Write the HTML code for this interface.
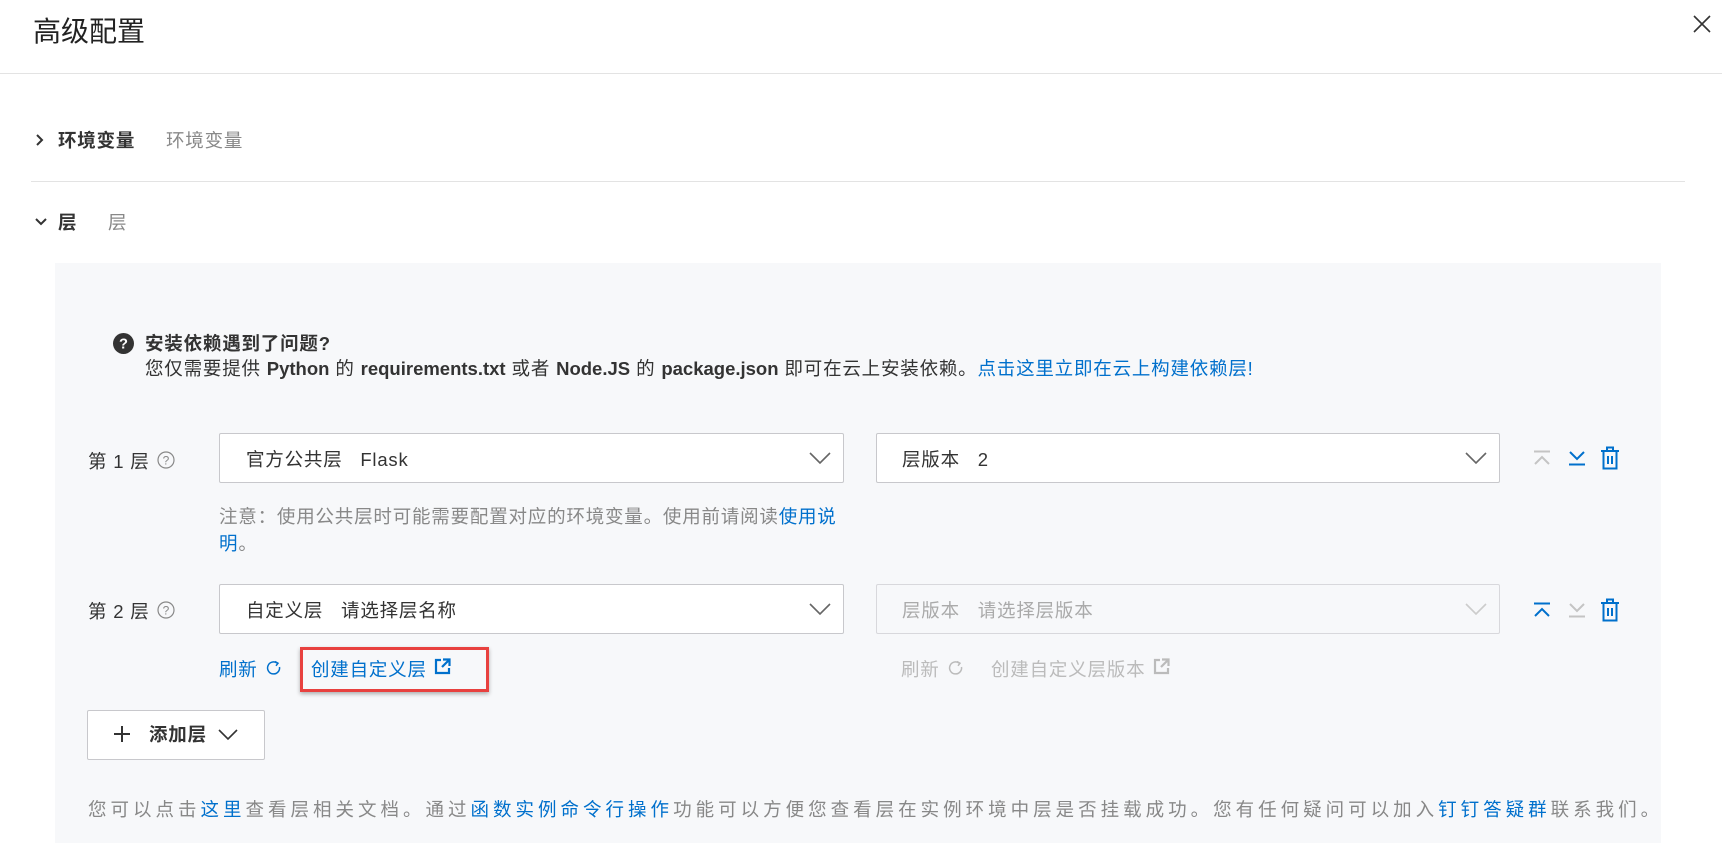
<!DOCTYPE html>
<html><head><meta charset="utf-8"><style>
*{box-sizing:border-box;margin:0;padding:0}
body{width:1722px;height:830px;overflow:hidden;background:#fff;font-family:"Liberation Sans","Noto Sans CJK SC",sans-serif;color:#333;position:relative}
.a{position:absolute;white-space:nowrap}
.t{font-size:18.5px;letter-spacing:0.8px}
.t b{letter-spacing:0}
.blue{color:#0070cc}
.gray{color:#888}
.lg{color:#bbb}
.sel{position:absolute;background:#fff;border:1px solid #c8c8cc;border-radius:2px;height:50px}
.sel span{position:absolute;top:12px;font-size:18.5px;letter-spacing:0.8px}
.sel svg{position:absolute;right:12px;top:17px}
</style></head><body>
<div class="a" style="left:33px;top:10px;font-size:28px;color:#222">高级配置</div>
<svg class="a" style="left:1693px;top:15px" width="18" height="18" viewBox="0 0 18 18"><path d="M1 1L17 17M17 1L1 17" stroke="#333" stroke-width="1.6"/></svg>
<div class="a" style="left:0;top:73px;width:1722px;height:1px;background:#e3e3e3"></div>

<svg class="a" style="left:35px;top:133px" width="10" height="14" viewBox="0 0 10 14"><path d="M2 2L7 7L2 12" stroke="#333" stroke-width="2" fill="none"/></svg>
<div class="a t" style="left:58px;top:127px;font-weight:bold;color:#333">环境变量</div>
<div class="a t gray" style="left:166px;top:127px">环境变量</div>
<div class="a" style="left:31px;top:181px;width:1654px;height:1px;background:#e3e3e3"></div>

<svg class="a" style="left:34px;top:217px" width="14" height="10" viewBox="0 0 14 10"><path d="M2 2L7 7L12 2" stroke="#333" stroke-width="2" fill="none"/></svg>
<div class="a t" style="left:58px;top:209px;font-weight:bold">层</div>
<div class="a t gray" style="left:108px;top:209px">层</div>

<div class="a" style="left:55px;top:263px;width:1606px;height:580px;background:#f7f8fa"></div>

<svg class="a" style="left:113px;top:333px" width="21" height="21" viewBox="0 0 20 20"><circle cx="10" cy="10" r="10" fill="#333"/><text x="10" y="15" text-anchor="middle" font-size="14" font-weight="bold" fill="#fff" font-family="Liberation Sans">?</text></svg>
<div class="a t" style="left:145px;top:330px;font-weight:bold">安装依赖遇到了问题?</div>
<div class="a t" style="left:145px;top:355px">您仅需要提供 <b>Python</b> 的 <b>requirements.txt</b> 或者 <b>Node.JS</b> 的 <b>package.json</b> 即可在云上安装依赖。<span class="blue">点击这里立即在云上构建依赖层!</span></div>

<div class="a t" style="left:88px;top:448px">第 1 层</div>
<svg class="a" style="left:157px;top:451px" width="18" height="18" viewBox="0 0 18 18"><circle cx="9" cy="9" r="8" stroke="#888" fill="none" stroke-width="1.2"/><text x="9" y="13.5" text-anchor="middle" font-size="12" fill="#888" font-family="Liberation Sans">?</text></svg>
<div class="sel" style="left:219px;top:433px;width:625px"><span style="left:26px;color:#333">官方公共层&nbsp;&nbsp;&nbsp;Flask</span><svg width="22" height="14" viewBox="0 0 22 14"><path d="M1 2L11 12L21 2" stroke="#666" stroke-width="1.6" fill="none"/></svg></div>
<div class="sel" style="left:876px;top:433px;width:624px"><span style="left:25px;color:#333">层版本&nbsp;&nbsp;&nbsp;2</span><svg width="22" height="14" viewBox="0 0 22 14"><path d="M1 2L11 12L21 2" stroke="#666" stroke-width="1.6" fill="none"/></svg></div>
<svg class="a" style="left:1533px;top:450px" width="18" height="16" viewBox="0 0 18 16"><path d="M1 1.5H17M2 14L9 7L16 14" stroke="#c4c4c4" stroke-width="2" fill="none"/></svg>
<svg class="a" style="left:1568px;top:450px" width="18" height="16" viewBox="0 0 18 16"><path d="M2 2L9 9L16 2M1 14.5H17" stroke="#0070cc" stroke-width="2" fill="none"/></svg>
<svg class="a" style="left:1601px;top:446px" width="18" height="24" viewBox="0 0 18 24"><path d="M0 5H18M6 5V1.5H12V5M2.5 6V22.5H15.5V6M7 10V18M11 10V18" stroke="#0070cc" stroke-width="2" fill="none"/></svg>

<div class="a t gray" style="left:219px;top:503px">注意：使用公共层时可能需要配置对应的环境变量。使用前请阅读<span class="blue">使用说</span></div>
<div class="a t blue" style="left:219px;top:530px">明<span class="gray">。</span></div>

<div class="a t" style="left:88px;top:598px">第 2 层</div>
<svg class="a" style="left:157px;top:601px" width="18" height="18" viewBox="0 0 18 18"><circle cx="9" cy="9" r="8" stroke="#888" fill="none" stroke-width="1.2"/><text x="9" y="13.5" text-anchor="middle" font-size="12" fill="#888" font-family="Liberation Sans">?</text></svg>
<div class="sel" style="left:219px;top:584px;width:625px"><span style="left:26px;color:#333">自定义层&nbsp;&nbsp;&nbsp;请选择层名称</span><svg width="22" height="14" viewBox="0 0 22 14"><path d="M1 2L11 12L21 2" stroke="#666" stroke-width="1.6" fill="none"/></svg></div>
<div class="sel" style="left:876px;top:584px;width:624px;background:#f7f8fa;border-color:#d8d8dc"><span style="left:25px;color:#aaa">层版本&nbsp;&nbsp;&nbsp;请选择层版本</span><svg width="22" height="14" viewBox="0 0 22 14"><path d="M1 2L11 12L21 2" stroke="#ccc" stroke-width="1.6" fill="none"/></svg></div>
<svg class="a" style="left:1533px;top:602px" width="18" height="16" viewBox="0 0 18 16"><path d="M1 1.5H17M2 14L9 7L16 14" stroke="#0070cc" stroke-width="2" fill="none"/></svg>
<svg class="a" style="left:1568px;top:602px" width="18" height="16" viewBox="0 0 18 16"><path d="M2 2L9 9L16 2M1 14.5H17" stroke="#c4c4c4" stroke-width="2" fill="none"/></svg>
<svg class="a" style="left:1601px;top:598px" width="18" height="24" viewBox="0 0 18 24"><path d="M0 5H18M6 5V1.5H12V5M2.5 6V22.5H15.5V6M7 10V18M11 10V18" stroke="#0070cc" stroke-width="2" fill="none"/></svg>

<div class="a t blue" style="left:219px;top:656px">刷新</div>
<svg class="a" style="left:266px;top:660px" width="16" height="16" viewBox="0 0 16 16"><path d="M11 3A6 6 0 1 0 13.5 7" stroke="#0070cc" stroke-width="1.5" fill="none"/><path d="M9 1.5L12 3.2L10 5.8" stroke="#0070cc" stroke-width="1.5" fill="none"/></svg>
<div class="a" style="left:300px;top:647px;width:189px;height:45px;border:3px solid #e8413f;box-shadow:0 2px 4px rgba(0,0,0,.3)"></div>
<div class="a t blue" style="left:311px;top:656px">创建自定义层</div>
<svg class="a" style="left:434px;top:658px" width="17" height="17" viewBox="0 0 17 17"><path d="M7 2H2V15H15V10" stroke="#0070cc" stroke-width="2.2" fill="none"/><path d="M9 1.5H15.5V8M15 2L8 9" stroke="#0070cc" stroke-width="2.2" fill="none"/></svg>
<div class="a t lg" style="left:901px;top:656px">刷新</div>
<svg class="a" style="left:948px;top:660px" width="16" height="16" viewBox="0 0 16 16"><path d="M11 3A6 6 0 1 0 13.5 7" stroke="#bbb" stroke-width="1.5" fill="none"/><path d="M9 1.5L12 3.2L10 5.8" stroke="#bbb" stroke-width="1.5" fill="none"/></svg>
<div class="a t lg" style="left:991px;top:656px">创建自定义层版本</div>
<svg class="a" style="left:1153px;top:658px" width="17" height="17" viewBox="0 0 17 17"><path d="M7 2H2V15H15V10" stroke="#bbb" stroke-width="2.2" fill="none"/><path d="M9 1.5H15.5V8M15 2L8 9" stroke="#bbb" stroke-width="2.2" fill="none"/></svg>

<div class="a" style="left:87px;top:710px;width:178px;height:50px;background:#fff;border:1px solid #c8c8cc;border-radius:2px"></div>
<svg class="a" style="left:113px;top:725px" width="18" height="18" viewBox="0 0 18 18"><path d="M9 1V17M1 9H17" stroke="#333" stroke-width="2"/></svg>
<div class="a t" style="left:149px;top:721px;font-weight:bold">添加层</div>
<svg class="a" style="left:218px;top:729px" width="20" height="12" viewBox="0 0 20 12"><path d="M1 1L10 10L19 1" stroke="#333" stroke-width="1.6" fill="none"/></svg>

<div class="a" style="left:88px;top:796px;font-size:18.5px;letter-spacing:4px;color:#888">您可以点击<span class="blue">这里</span>查看层相关文档。通过<span class="blue">函数实例命令行操作</span>功能可以方便您查看层在实例环境中层是否挂载成功。您有任何疑问可以加入<span class="blue">钉钉答疑群</span>联系我们。</div>
</body></html>
